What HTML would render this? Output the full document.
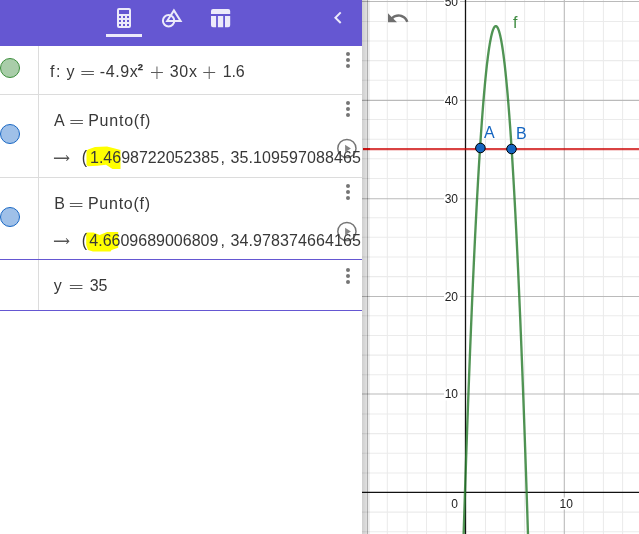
<!DOCTYPE html>
<html lang="es">
<head>
<meta charset="utf-8">
<title>GeoGebra</title>
<style>
html,body{margin:0;padding:0;background:#fff;}
body{width:639px;height:534px;overflow:hidden;position:relative;font-family:"Liberation Sans",Arial,sans-serif;}
.graph{position:absolute;left:362px;top:0;display:block;will-change:transform;}
.panel{position:absolute;left:0;top:0;width:362px;height:534px;background:#fff;overflow:hidden;}
.header{position:absolute;left:0;top:0;width:362px;height:46px;background:#6557d2;}
.header svg{position:absolute;left:0;top:0;}
.row{position:absolute;left:0;width:362px;box-sizing:border-box;border-bottom:1px solid #dcdcdc;}
.row .mk{position:absolute;left:0;top:0;bottom:0;width:38px;border-right:1px solid #dcdcdc;}
.marble{position:absolute;left:0;width:18px;height:18px;border-radius:50%;border:1px solid;}
.dots{position:absolute;left:346px;width:4px;}
.dots i{display:block;width:4px;height:4px;border-radius:50%;background:#757575;margin-bottom:2px;}
.t{position:absolute;font-size:16px;line-height:24px;height:24px;color:#383838;white-space:pre;}
.t.op{font-family:"DejaVu Sans Light","DejaVu Sans",sans-serif;font-size:20px;color:#5a5a5a;}
.t.ar{font-family:"DejaVu Serif","DejaVu Sans",serif;font-size:21px;color:#555;clip-path:inset(9.4px 0 8.4px 0);}
.t.sup{font-weight:bold;font-size:17px;}
.t.pn{transform:scaleY(1.13);}
.t.pl{font-family:"DejaVu Sans Light","DejaVu Sans",sans-serif;font-size:19px;color:#5a5a5a;}
.hl{position:absolute;left:0;top:0;}
.txt{position:absolute;left:0;top:0;width:362px;height:534px;will-change:transform;}
.play{position:absolute;left:337px;width:20px;height:20px;}
.redover{position:absolute;left:363px;top:148px;width:7px;height:2.4px;background:rgba(204,0,0,0.7);}
.divider{position:absolute;left:362px;top:0;width:8px;height:534px;background:linear-gradient(to right,rgba(0,0,0,0.19) 0px,rgba(0,0,0,0.12) 5px,rgba(0,0,0,0.32) 5px,rgba(0,0,0,0.32) 6px,rgba(0,0,0,0.08) 6px,rgba(0,0,0,0.06) 8px);}
</style>
</head>
<body>
<svg class="graph" width="277" height="534" viewBox="362 0 277 534">
<g stroke="#ebebeb" stroke-width="1.05">
<line x1="387.3" y1="0" x2="387.3" y2="534"/>
<line x1="407.2" y1="0" x2="407.2" y2="534"/>
<line x1="426.5" y1="0" x2="426.5" y2="534"/>
<line x1="446.2" y1="0" x2="446.2" y2="534"/>
<line x1="485.5" y1="0" x2="485.5" y2="534"/>
<line x1="505.3" y1="0" x2="505.3" y2="534"/>
<line x1="524.6" y1="0" x2="524.6" y2="534"/>
<line x1="544.5" y1="0" x2="544.5" y2="534"/>
<line x1="583.6" y1="0" x2="583.6" y2="534"/>
<line x1="603.4" y1="0" x2="603.4" y2="534"/>
<line x1="622.6" y1="0" x2="622.6" y2="534"/>
<line x1="362" y1="531.8" x2="639" y2="531.8"/>
<line x1="362" y1="512.1" x2="639" y2="512.1"/>
<line x1="362" y1="472.9" x2="639" y2="472.9"/>
<line x1="362" y1="453.2" x2="639" y2="453.2"/>
<line x1="362" y1="433.6" x2="639" y2="433.6"/>
<line x1="362" y1="414.0" x2="639" y2="414.0"/>
<line x1="362" y1="374.7" x2="639" y2="374.7"/>
<line x1="362" y1="355.1" x2="639" y2="355.1"/>
<line x1="362" y1="335.5" x2="639" y2="335.5"/>
<line x1="362" y1="315.8" x2="639" y2="315.8"/>
<line x1="362" y1="276.6" x2="639" y2="276.6"/>
<line x1="362" y1="256.9" x2="639" y2="256.9"/>
<line x1="362" y1="237.3" x2="639" y2="237.3"/>
<line x1="362" y1="217.7" x2="639" y2="217.7"/>
<line x1="362" y1="178.4" x2="639" y2="178.4"/>
<line x1="362" y1="158.8" x2="639" y2="158.8"/>
<line x1="362" y1="139.2" x2="639" y2="139.2"/>
<line x1="362" y1="119.5" x2="639" y2="119.5"/>
<line x1="362" y1="80.3" x2="639" y2="80.3"/>
<line x1="362" y1="60.6" x2="639" y2="60.6"/>
<line x1="362" y1="41.0" x2="639" y2="41.0"/>
<line x1="362" y1="21.4" x2="639" y2="21.4"/>
</g>
<g stroke="#bababa" stroke-width="1.1">
<line x1="564.3" y1="0" x2="564.3" y2="534"/>
<line x1="362" y1="1.5" x2="639" y2="1.5"/>
<line x1="362" y1="100.4" x2="639" y2="100.4"/>
<line x1="362" y1="198.8" x2="639" y2="198.8"/>
<line x1="362" y1="296.5" x2="639" y2="296.5"/>
<line x1="362" y1="394.0" x2="639" y2="394.0"/>
</g>
<line x1="362" y1="492.4" x2="639" y2="492.4" stroke="#111" stroke-width="1.15"/>
<line x1="465.5" y1="0" x2="465.5" y2="534" stroke="#111" stroke-width="1.3"/>
<g font-family="'Liberation Sans', Arial, sans-serif" font-size="12" fill="#222">
<rect x="444" y="-5.0" width="16" height="13" fill="#fff"/>
<text x="458" y="5.8" text-anchor="end">50</text>
<rect x="444" y="93.9" width="16" height="13" fill="#fff"/>
<text x="458" y="104.7" text-anchor="end">40</text>
<rect x="444" y="192.3" width="16" height="13" fill="#fff"/>
<text x="458" y="203.1" text-anchor="end">30</text>
<rect x="444" y="290.0" width="16" height="13" fill="#fff"/>
<text x="458" y="300.8" text-anchor="end">20</text>
<rect x="444" y="387.5" width="16" height="13" fill="#fff"/>
<text x="458" y="398.3" text-anchor="end">10</text>
<text x="458" y="507.8" text-anchor="end">0</text>
<rect x="559" y="497.5" width="14" height="12" fill="#fff"/>
<text x="559.6" y="507.8">10</text>
</g>
<line x1="363" y1="149.1" x2="639" y2="149.1" stroke="#cc0000" stroke-opacity="0.74" stroke-width="2.4"/>
<path d="M459.56,670.78 L459.76,663.76 L459.96,656.77 L460.15,649.82 L460.35,642.91 L460.55,636.04 L460.75,629.21 L460.95,622.42 L461.14,615.66 L461.34,608.95 L461.54,602.27 L461.74,595.63 L461.94,589.03 L462.13,582.47 L462.33,575.94 L462.53,569.46 L462.73,563.01 L462.93,556.60 L463.12,550.23 L463.32,543.90 L463.52,537.61 L463.72,531.36 L463.92,525.14 L464.11,518.96 L464.31,512.82 L464.51,506.72 L464.71,500.66 L464.91,494.64 L465.10,488.65 L465.30,482.70 L465.50,476.80 L465.70,470.93 L465.90,465.09 L466.09,459.30 L466.29,453.55 L466.49,447.83 L466.69,442.15 L466.89,436.52 L467.08,430.92 L467.28,425.35 L467.48,419.83 L467.68,414.34 L467.88,408.90 L468.07,403.49 L468.27,398.12 L468.47,392.79 L468.67,387.50 L468.87,382.24 L469.06,377.03 L469.26,371.85 L469.46,366.71 L469.66,361.61 L469.86,356.55 L470.05,351.53 L470.25,346.54 L470.45,341.59 L470.65,336.69 L470.85,331.82 L471.04,326.99 L471.24,322.19 L471.44,317.44 L471.64,312.72 L471.84,308.05 L472.03,303.41 L472.23,298.81 L472.43,294.25 L472.63,289.72 L472.83,285.24 L473.02,280.79 L473.22,276.39 L473.42,272.02 L473.62,267.69 L473.82,263.39 L474.01,259.14 L474.21,254.92 L474.41,250.75 L474.61,246.61 L474.81,242.51 L475.00,238.45 L475.20,234.42 L475.40,230.44 L475.60,226.49 L475.80,222.59 L475.99,218.72 L476.19,214.89 L476.39,211.09 L476.59,207.34 L476.79,203.63 L476.98,199.95 L477.18,196.31 L477.38,192.71 L477.58,189.15 L477.78,185.63 L477.97,182.14 L478.17,178.70 L478.37,175.29 L478.57,171.92 L478.77,168.59 L478.96,165.30 L479.16,162.04 L479.36,158.83 L479.56,155.65 L479.76,152.51 L479.95,149.42 L480.15,146.35 L480.35,143.33 L480.55,140.35 L480.75,137.40 L480.94,134.49 L481.14,131.63 L481.34,128.80 L481.54,126.00 L481.74,123.25 L481.93,120.54 L482.13,117.86 L482.33,115.22 L482.53,112.62 L482.73,110.06 L482.92,107.54 L483.12,105.05 L483.32,102.61 L483.52,100.20 L483.72,97.83 L483.91,95.50 L484.11,93.21 L484.31,90.96 L484.51,88.74 L484.71,86.57 L484.90,84.43 L485.10,82.33 L485.30,80.27 L485.50,78.25 L485.70,76.26 L485.89,74.32 L486.09,72.41 L486.29,70.54 L486.49,68.71 L486.69,66.92 L486.88,65.17 L487.08,63.45 L487.28,61.78 L487.48,60.14 L487.68,58.54 L487.87,56.98 L488.07,55.46 L488.27,53.98 L488.47,52.53 L488.67,51.12 L488.86,49.76 L489.06,48.43 L489.26,47.13 L489.46,45.88 L489.66,44.67 L489.85,43.49 L490.05,42.35 L490.25,41.26 L490.45,40.19 L490.65,39.17 L490.84,38.19 L491.04,37.24 L491.24,36.34 L491.44,35.47 L491.64,34.64 L491.83,33.85 L492.03,33.10 L492.23,32.38 L492.43,31.71 L492.63,31.07 L492.82,30.47 L493.02,29.91 L493.22,29.39 L493.42,28.91 L493.62,28.46 L493.81,28.05 L494.01,27.69 L494.21,27.36 L494.41,27.07 L494.61,26.81 L494.80,26.60 L495.00,26.42 L495.20,26.29 L495.40,26.19 L495.60,26.13 L495.79,26.11 L495.99,26.12 L496.19,26.18 L496.39,26.27 L496.59,26.41 L496.78,26.58 L496.98,26.79 L497.18,27.03 L497.38,27.32 L497.58,27.64 L497.77,28.01 L497.97,28.41 L498.17,28.85 L498.37,29.33 L498.57,29.84 L498.76,30.40 L498.96,30.99 L499.16,31.63 L499.36,32.30 L499.56,33.01 L499.75,33.76 L499.95,34.54 L500.15,35.37 L500.35,36.23 L500.55,37.13 L500.74,38.07 L500.94,39.05 L501.14,40.07 L501.34,41.12 L501.54,42.22 L501.73,43.35 L501.93,44.52 L502.13,45.73 L502.33,46.98 L502.53,48.27 L502.72,49.59 L502.92,50.95 L503.12,52.36 L503.32,53.80 L503.52,55.28 L503.71,56.79 L503.91,58.35 L504.11,59.94 L504.31,61.58 L504.51,63.25 L504.70,64.96 L504.90,66.71 L505.10,68.49 L505.30,70.32 L505.50,72.18 L505.69,74.08 L505.89,76.02 L506.09,78.00 L506.29,80.02 L506.49,82.08 L506.68,84.17 L506.88,86.30 L507.08,88.48 L507.28,90.69 L507.48,92.93 L507.67,95.22 L507.87,97.55 L508.07,99.91 L508.27,102.31 L508.47,104.75 L508.66,107.23 L508.86,109.75 L509.06,112.31 L509.26,114.90 L509.46,117.53 L509.65,120.21 L509.85,122.92 L510.05,125.66 L510.25,128.45 L510.45,131.28 L510.64,134.14 L510.84,137.04 L511.04,139.98 L511.24,142.96 L511.44,145.98 L511.63,149.04 L511.83,152.13 L512.03,155.27 L512.23,158.44 L512.43,161.65 L512.62,164.90 L512.82,168.18 L513.02,171.51 L513.22,174.87 L513.42,178.28 L513.61,181.72 L513.81,185.20 L514.01,188.72 L514.21,192.27 L514.41,195.87 L514.60,199.50 L514.80,203.17 L515.00,206.88 L515.20,210.63 L515.40,214.42 L515.59,218.25 L515.79,222.11 L515.99,226.01 L516.19,229.95 L516.39,233.93 L516.58,237.95 L516.78,242.01 L516.98,246.10 L517.18,250.24 L517.38,254.41 L517.57,258.62 L517.77,262.87 L517.97,267.16 L518.17,271.48 L518.37,275.85 L518.56,280.25 L518.76,284.69 L518.96,289.17 L519.16,293.69 L519.36,298.25 L519.55,302.84 L519.75,307.48 L519.95,312.15 L520.15,316.86 L520.35,321.61 L520.54,326.40 L520.74,331.22 L520.94,336.09 L521.14,340.99 L521.34,345.93 L521.53,350.91 L521.73,355.93 L521.93,360.99 L522.13,366.08 L522.33,371.22 L522.52,376.39 L522.72,381.60 L522.92,386.85 L523.12,392.14 L523.32,397.47 L523.51,402.83 L523.71,408.23 L523.91,413.68 L524.11,419.16 L524.31,424.67 L524.50,430.23 L524.70,435.83 L524.90,441.46 L525.10,447.13 L525.30,452.85 L525.49,458.60 L525.69,464.38 L525.89,470.21 L526.09,476.08 L526.29,481.98 L526.48,487.92 L526.68,493.90 L526.88,499.92 L527.08,505.98 L527.28,512.07 L527.47,518.21 L527.67,524.38 L527.87,530.59 L528.07,536.84 L528.27,543.13 L528.46,549.46 L528.66,555.82 L528.86,562.23 L529.06,568.67 L529.26,575.15 L529.45,581.67 L529.65,588.23 L529.85,594.82 L530.05,601.46 L530.25,608.13 L530.44,614.84 L530.64,621.59 L530.84,628.38 L531.04,635.21 L531.24,642.07 L531.43,648.98 L531.63,655.92 L531.83,662.90 L532.03,669.92 L532.23,676.98 L532.42,684.07 L532.62,691.21 L532.82,698.38" fill="none" stroke="#2a7d2e" stroke-opacity="0.82" stroke-width="2.35" stroke-linejoin="round"/>
<circle cx="480.4" cy="148" r="4.8" fill="#1565c0" stroke="#000" stroke-width="1"/>
<circle cx="511.5" cy="149" r="4.8" fill="#1565c0" stroke="#000" stroke-width="1"/>
<g font-family="'Liberation Sans', Arial, sans-serif" font-size="16">
<text x="484" y="137.5" fill="#1565c0">A</text>
<text x="516" y="138.5" fill="#1565c0">B</text>
<text x="513" y="27.7" fill="#3c8a3f">f</text>
</g>
<g transform="translate(386,6.3)"><path fill="#6e6e6e" d="M12.5 8c-2.65 0-5.05.99-6.9 2.6L2 7v9h9l-3.62-3.62c1.39-1.16 3.16-1.88 5.12-1.88 3.54 0 6.55 2.31 7.6 5.5l2.37-.78C21.08 11.03 17.15 8 12.5 8z"/></g>
</svg>
<div class="panel">
  <div class="header">
    <svg width="362" height="46" viewBox="0 0 362 46">
      <g fill="#eceafa">
        <path fill-rule="evenodd" d="M119 8h10a2 2 0 0 1 2 2v16a2 2 0 0 1-2 2h-10a2 2 0 0 1-2-2v-16a2 2 0 0 1 2-2zM119 10v4h10v-4zM119 16v2h2v-2zM123 16v2h2v-2zM127 16v2h2v-2zM119 20v2h2v-2zM123 20v2h2v-2zM127 20v2h2v-2zM119 24v2h2v-2zM123 24v2h2v-2zM127 24v2h2v-2z"/>
        <rect x="106" y="34" width="36" height="3"/>
        <path d="M213 9h15.200a2 2 0 0 1 2 2v3.100h-19.200v-3.100a2 2 0 0 1 2-2zM211 15.900h5.100v11.300h-3.100a2 2 0 0 1-2-2zM217.900 15.900h5.300v11.300h-5.300zM225 15.900h5.200v9.300a2 2 0 0 1-2 2h-3.200z"/>
      </g>
      <g fill="none" stroke="#eceafa" stroke-width="2">
        <circle cx="168.6" cy="20.8" r="5.7"/>
        <path d="M173.9 10.4l6.7 10.6h-13.4z" stroke-linejoin="miter"/>
      </g>
      <g transform="translate(326,5.7)"><path fill="#eceafa" d="M15.41 7.41L14 6l-6 6 6 6 1.41-1.41L10.83 12z"/></g>
    </svg>
  </div>
  <div class="row" style="top:46px;height:49px;"><div class="mk"><div class="marble" style="top:12px;background:#a9cda9;border-color:#3d8f3d;"></div></div><div class="dots" style="top:6px"><i></i><i></i><i></i></div></div>
  <div class="row" style="top:95px;height:83px;"><div class="mk"><div class="marble" style="top:28.8px;background:#9fc0e8;border-color:#1a68c4;"></div></div><div class="dots" style="top:6px"><i></i><i></i><i></i></div></div>
  <div class="row" style="top:178px;height:82px;border-bottom-color:#6557d2;"><div class="mk"><div class="marble" style="top:28.9px;background:#9fc0e8;border-color:#1a68c4;"></div></div><div class="dots" style="top:6px"><i></i><i></i><i></i></div></div>
  <div class="row" style="top:260px;height:51px;border-bottom-color:#6557d2;"><div class="mk"></div><div class="dots" style="top:8px"><i></i><i></i><i></i></div></div>
  <svg class="hl" width="362" height="534" viewBox="0 0 362 534">
    <path fill="#ffff00" d="M86.5,151 L88,149.5 L95,147 L107,146.6 L113,148 L120.5,150 L120.5,169 L112.5,169 L106,164.8 L97.5,165.8 L88,166.3 L86.5,165 Z"/>
    <path fill="#ffff00" d="M86.2,232.4 L93.5,232.4 L99.6,235.1 L107.2,232 L118.2,232 L118.2,247.7 L111.6,250 L110.5,251.6 L93,251.6 L88,250 L86.2,245 Z"/>
    <g fill="#fff" fill-opacity="0.6" stroke="#747474" stroke-width="1.45">
      <circle cx="346.9" cy="148.5" r="9.1"/>
      <circle cx="346.9" cy="231.5" r="9.1"/>
    </g>
    <g fill="#858585"><path d="M345.1,144.7l5.8,3.8l-5.8,3.8z"/><path d="M345.1,227.7l5.8,3.8l-5.8,3.8z"/></g>
  </svg>
  <div class="txt">
  <span class="t " style="left:50.00px;top:60.00px;letter-spacing:1.50px;">f:</span>
  <span class="t " style="left:66.55px;top:60.00px;">y</span>
  <span class="t op" style="left:79.30px;top:60.00px;">=</span>
  <span class="t " style="left:99.70px;top:60.00px;letter-spacing:0.62px;">-4.9x</span>
  <span class="t sup" style="left:137.40px;top:59.40px;">²</span>
  <span class="t pl" style="left:148.95px;top:60.00px;">+</span>
  <span class="t " style="left:169.70px;top:60.00px;letter-spacing:0.70px;">30x</span>
  <span class="t pl" style="left:201.25px;top:60.00px;">+</span>
  <span class="t " style="left:222.80px;top:60.00px;letter-spacing:-0.15px;">1.6</span>
  <span class="t " style="left:54.10px;top:109.00px;">A</span>
  <span class="t op" style="left:68.25px;top:109.00px;">=</span>
  <span class="t " style="left:88.20px;top:109.00px;letter-spacing:0.76px;">Punto(f)</span>
  <span class="t ar" style="left:52.80px;top:145.50px;">→</span>
  <span class="t pn" style="left:81.65px;top:145.30px;">(</span>
  <span class="t " style="left:90.00px;top:146.00px;">1.4698722052385</span>
  <span class="t " style="left:220.50px;top:146.00px;">,</span>
  <span class="t " style="left:230.50px;top:146.00px;letter-spacing:0.09px;">35.109597088465</span>
  <span class="t " style="left:363.00px;top:146.00px;">)</span>
  <span class="t " style="left:54.20px;top:192.00px;">B</span>
  <span class="t op" style="left:67.80px;top:192.00px;">=</span>
  <span class="t " style="left:87.90px;top:192.00px;letter-spacing:0.76px;">Punto(f)</span>
  <span class="t ar" style="left:52.80px;top:228.50px;">→</span>
  <span class="t pn" style="left:81.65px;top:228.30px;">(</span>
  <span class="t " style="left:89.30px;top:229.00px;">4.6609689006809</span>
  <span class="t " style="left:220.50px;top:229.00px;">,</span>
  <span class="t " style="left:230.50px;top:229.00px;letter-spacing:0.09px;">34.978374664165</span>
  <span class="t " style="left:363.00px;top:229.00px;">)</span>
  <span class="t " style="left:53.85px;top:274.40px;">y</span>
  <span class="t op" style="left:67.85px;top:274.40px;">=</span>
  <span class="t " style="left:89.80px;top:274.40px;letter-spacing:-0.10px;">35</span>
  </div>
</div>
<div class="divider"></div>
<div class="redover"></div>
</body>
</html>
